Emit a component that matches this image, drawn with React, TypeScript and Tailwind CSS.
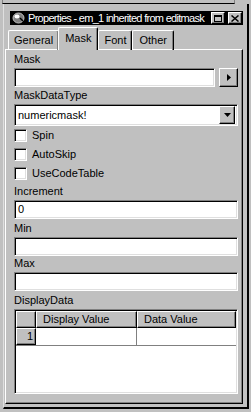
import React from 'react';

const raised = 'border border-t-white border-l-white border-r-black border-b-black shadow-[inset_-1px_-1px_0_#808080]';
const sunken = 'border border-t-[#808080] border-l-[#808080] border-r-white border-b-white shadow-[inset_1px_1px_0_#000,inset_-1px_-1px_0_#dfdfdf]';

function Label({ text, className = '' }: { text: string; className?: string }) {
    return <div className={`h-[14px] leading-[14px] ${className}`}>{text}</div>;
}

function Input({ value = '', className = '' }: { value?: string; className?: string }) {
    return <div className={`h-[19px] bg-white ${sunken} pl-[3px] leading-[17px] ${className}`}>{value}</div>;
}

function Check({ label }: { label: string }) {
    return (
        <div className="flex items-center h-[19px]">
            <div className={`w-[13px] h-[13px] bg-white ${sunken}`} />
            <span className="ml-[5px]">{label}</span>
        </div>
    );
}

export default function App() {
    return (
        <div className="w-[251px] h-[412px] bg-[#c0c0c0] flex flex-col overflow-hidden text-[11px] text-black pb-[3px]" style={{ fontFamily: '"Liberation Sans", Arial, sans-serif' }}>
            <div className="h-[4px] shrink-0 ml-[2px] mr-[16px] border-b border-black border-l border-l-[#808080] border-r border-r-[#808080]" />
            <div className="flex-1 flex flex-col border-l border-l-[#dfdfdf] border-r-2 border-r-black border-b-2 border-b-black ml-[3px] mr-[2px] pl-[1px] pr-[4px] pb-[3px] pt-[7px]">
                {/* title bar */}
                <div className="h-[14px] shrink-0 bg-black text-white flex items-center ml-[5px] pl-[2px] pr-[1px]">
                    <svg width="13" height="12" viewBox="0 0 13 12" className="shrink-0">
                        <ellipse cx="6.5" cy="6" rx="5.5" ry="5" fill="#808080" stroke="#c0c0c0" />
                        <ellipse cx="5" cy="4.5" rx="2.5" ry="2" fill="#fff" />
                        <path d="M8 6 L11 9" stroke="#000" strokeWidth="1.5" />
                    </svg>
                    <span className="ml-[3px] whitespace-nowrap tracking-[-0.7px]">Properties - em_1 inherited from editmask</span>
                    <div className="flex-1" />
                    <div className={`w-[14px] h-[12px] shrink-0 bg-[#c0c0c0] ${raised} flex items-center justify-center`}>
                        <div className="w-[8px] h-[7px] border border-black border-t-2" />
                    </div>
                    <div className={`w-[14px] h-[12px] shrink-0 bg-[#c0c0c0] ${raised} flex items-center justify-center ml-[3px]`}>
                        <svg width="8" height="7" viewBox="0 0 8 7">
                            <path d="M0.5 0.5 L7.5 6.5 M7.5 0.5 L0.5 6.5" stroke="#000" strokeWidth="1.5" />
                        </svg>
                    </div>
                </div>
                {/* tabs */}
                <div className="flex items-end h-[24px] shrink-0 relative z-10 pl-[3px]">
                    <div className="h-[20px] px-[5px] border-t border-l border-white border-r border-r-black rounded-t-[2px] leading-[18px] mb-[-1px] shadow-[inset_-1px_0_0_#808080]">General</div>
                    <div className="h-[23px] px-[6px] border-t border-l border-white border-r border-r-black rounded-t-[2px] leading-[20px] bg-[#c0c0c0] mb-[-1px] ml-[-1px] shadow-[inset_-1px_0_0_#808080] -mt-[2px]">Mask</div>
                    <div className="h-[20px] px-[5px] border-t border-l border-white border-r border-r-black rounded-t-[2px] leading-[18px] mb-[-1px] shadow-[inset_-1px_0_0_#808080]">Font</div>
                    <div className="h-[20px] px-[6px] border-t border-l border-white border-r border-r-black rounded-t-[2px] leading-[18px] mb-[-1px] shadow-[inset_-1px_0_0_#808080]">Other</div>
                </div>
                {/* panel */}
                <div className="flex-1 border border-t-white border-l-white border-r-black border-b-black shadow-[inset_-1px_-1px_0_#808080] pl-[8px] pr-[4px] pt-[2px] pb-[9px] flex flex-col">
                    <Label text="Mask" />
                    <div className="flex items-center mt-[2px]">
                        <Input className="flex-1" />
                        <div className={`w-[19px] h-[19px] ml-[4px] bg-[#c0c0c0] ${raised} flex items-center justify-center`}>
                            <svg width="4" height="7" viewBox="0 0 4 7"><path d="M0 0 L4 3.5 L0 7 Z" fill="#000" /></svg>
                        </div>
                    </div>
                    <Label text="MaskDataType" className="mt-[1px]" />
                    <div className={`h-[22px] mt-[2px] bg-white ${sunken} flex items-center pl-[3px] pr-[2px]`}>
                        <span className="flex-1">numericmask!</span>
                        <div className={`w-[16px] h-[18px] bg-[#c0c0c0] ${raised} flex items-center justify-center`}>
                            <svg width="7" height="4" viewBox="0 0 7 4"><path d="M0 0 L7 0 L3.5 4 Z" fill="#000" /></svg>
                        </div>
                    </div>
                    <div className="flex flex-col">
                        <Check label="Spin" />
                        <Check label="AutoSkip" />
                        <Check label="UseCodeTable" />
                    </div>
                    <Label text="Increment" className="mt-[1px]" />
                    <Input value="0" className="mt-[2px]" />
                    <Label text="Min" className="mt-[2px]" />
                    <Input className="mt-[2px]" />
                    <Label text="Max" />
                    <Input className="mt-[2px]" />
                    <Label text="DisplayData" className="mt-[2px]" />
                    <div className={`flex-1 mt-[2px] bg-white ${sunken} p-[1px] flex flex-col`}>
                        <div className="flex h-[17px]">
                            <div className={`w-[20px] bg-[#c0c0c0] ${raised}`} />
                            <div className={`w-[101px] bg-[#c0c0c0] ${raised} pl-[6px] leading-[14px]`}>Display Value</div>
                            <div className={`flex-1 bg-[#c0c0c0] ${raised} pl-[6px] leading-[14px]`}>Data Value</div>
                        </div>
                        <div className="flex h-[18px] border-b border-[#808080]">
                            <div className={`w-[20px] bg-[#c0c0c0] ${raised} text-right pr-[2px] leading-[15px]`}>1</div>
                            <div className="w-[101px] border-r border-[#808080]" />
                            <div className="flex-1" />
                        </div>
                    </div>
                </div>
            </div>
        </div>
    );
}
